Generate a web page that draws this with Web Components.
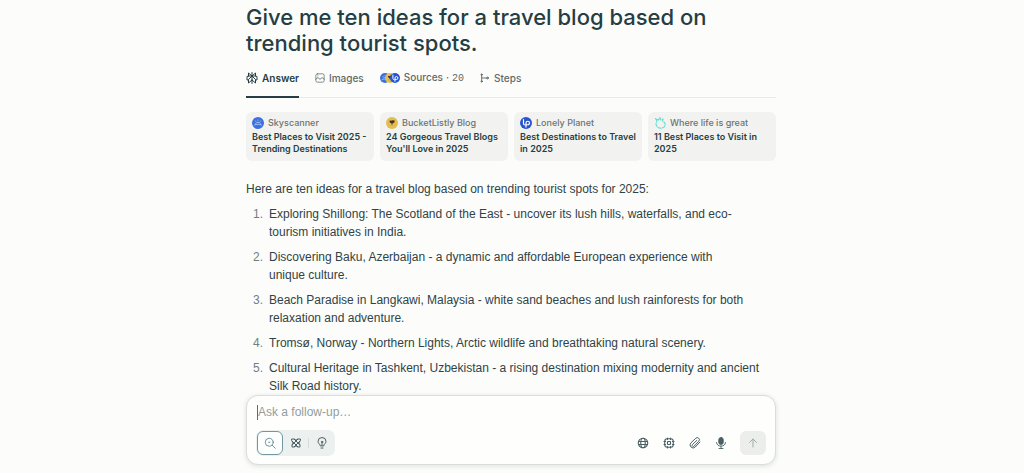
<!DOCTYPE html>
<html lang="en">
<head>
<meta charset="utf-8">
<meta name="viewport" content="width=device-width, initial-scale=1">
<title>Travel blog ideas</title>
<style>
  html, body { margin: 0; height: 100%; }
  body {
    background: #fcfdfa; color: #304347;
    font-family: "Liberation Sans", Arial, sans-serif; font-size: 12px; line-height: 18px;
    --ui: Inter, "Liberation Sans", sans-serif;
    --ink: #263e43; --muted: #5d6a6b; --line: #e8ebe8; --card: #f2f3f0;
  }
</style>
</head>
<body>
<answer-page></answer-page>

<template id="t-page">
  <style>
    :host { display: flex; flex-direction: column; align-items: center; height: 100vh; box-sizing: border-box; padding-right: 2px; overflow: hidden; }
    main, follow-up { width: 100%; max-width: 530px; }
    main { flex: 1; min-height: 0; }
    follow-up { flex: none; margin-bottom: 8px; }
    h1 { margin: 4px 0 0; font: 500 22px/26px var(--ui); color: var(--ink); }
    .cards { display: grid; grid-template-columns: repeat(4, 1fr); gap: 6px; margin-top: 14px; }
    p { margin: 19px 0 7px; }
  </style>
  <main>
    <h1>Give me ten ideas for a travel blog based on<br>trending tourist spots.</h1>
    <tab-bar></tab-bar>
    <section class="cards" aria-label="Sources">
      <source-card icon="sky" site="Skyscanner">Best Places to Visit 2025 -<br>Trending Destinations</source-card>
      <source-card icon="bucket" site="BucketListly Blog">24 Gorgeous Travel Blogs<br>You'll Love in 2025</source-card>
      <source-card icon="lonely" site="Lonely Planet">Best Destinations to Travel<br>in 2025</source-card>
      <source-card icon="life" site="Where life is great">11 Best Places to Visit in<br>2025</source-card>
    </section>
    <p>Here are ten ideas for a travel blog based on trending tourist spots for 2025:</p>
    <idea-list></idea-list>
  </main>
  <follow-up></follow-up>
</template>

<template id="t-tabs">
  <style>
    :host { display: block; margin-top: 12px; border-bottom: 1px solid var(--line); }
    nav { display: flex; gap: 16px; margin-bottom: -1px; }
    button { all: unset; box-sizing: border-box; height: 30px; padding-bottom: 10px; display: flex; align-items: center; gap: 4px;
      font: 500 10px/14px var(--ui); color: var(--muted); cursor: pointer; }
    button[aria-selected=true] { color: var(--ink); font-weight: 600; border-bottom: 2px solid var(--ink); padding-bottom: 8px; }
    .count { font: 400 10px/14px "Liberation Mono", monospace; }
    .label { display: flex; align-items: baseline; gap: 3px; }
    .stack { display: flex; }
    .stack ui-icon + ui-icon { margin-left: -5px; }
  </style>
  <nav role="tablist">
    <button role="tab" aria-selected="true"><ui-icon name="logo" size="12"></ui-icon>Answer</button>
    <button role="tab"><ui-icon name="image" size="10"></ui-icon>Images</button>
    <button role="tab"><span class="stack"><ui-icon name="sky" size="10"></ui-icon><ui-icon name="bucket" size="10"></ui-icon><ui-icon name="lonely" size="10"></ui-icon></span><span class="label">Sources<span>·</span><span class="count">20</span></span></button>
    <button role="tab"><ui-icon name="steps" size="10"></ui-icon>Steps</button>
  </nav>
</template>

<template id="t-card">
  <style>
    :host { display: block; min-width: 0; }
    a { display: block; box-sizing: border-box; height: 100%; padding: 5px 6px 6px; border-radius: 6px; background: var(--card);
      color: var(--ink); text-decoration: none; white-space: nowrap; }
    .site { display: flex; align-items: center; gap: 4px; margin-bottom: 2px; font: 500 9px/12px var(--ui); color: #6c7473; }
    .title { font: 600 9px/12px var(--ui); }
  </style>
  <a href="#"><div class="site"><ui-icon size="12"></ui-icon><span id="site"></span></div><div class="title"><slot></slot></div></a>
</template>

<template id="t-list">
  <style>
    ol { list-style: none; counter-reset: n; margin: 0; padding: 0; }
    li { display: grid; grid-template-columns: 17px 1fr; column-gap: 6px; margin-bottom: 7px; counter-increment: n; }
    li::before { content: counter(n) "."; text-align: right; color: #727e7f; }
  </style>
  <ol>
    <li><span>Exploring Shillong: The Scotland of the East - uncover its lush hills, waterfalls, and eco-<br>tourism initiatives in India.</span></li>
    <li><span>Discovering Baku, Azerbaijan - a dynamic and affordable European experience with<br>unique culture.</span></li>
    <li><span>Beach Paradise in Langkawi, Malaysia - white sand beaches and lush rainforests for both<br>relaxation and adventure.</span></li>
    <li><span>Tromsø, Norway - Northern Lights, Arctic wildlife and breathtaking natural scenery.</span></li>
    <li><span>Cultural Heritage in Tashkent, Uzbekistan - a rising destination mixing modernity and ancient<br>Silk Road history.</span></li>
  </ol>
</template>

<template id="t-follow">
  <style>
    :host { display: block; position: relative; }
    form { box-sizing: border-box; margin: 0; padding: 7px 9px 8px; border: 1px solid #d9dddb; border-radius: 12px; background: #fefffd;
      box-shadow: 0 1px 5px rgba(30, 50, 50, .14); }
    .entry { display: flex; align-items: center; height: 18px; margin-bottom: 9px; }
    .caret { width: 1px; height: 15px; background: #4c7580; margin-left: 1px; }
    input { all: unset; flex: 1; min-width: 0; font-size: 12px; line-height: 18px; }
    input::placeholder { color: #929d9d; opacity: 1; }
    .bar { display: flex; align-items: center; justify-content: space-between; }
    .modes, .tools { display: flex; align-items: center; }
    button { all: unset; box-sizing: border-box; width: 26px; height: 24px; display: flex; align-items: center; justify-content: center; color: #4b6064; cursor: pointer; }
    .modes { padding: 1px; border-radius: 7px; background: #ecf1ef; }
    .modes button { width: 25px; }
    .modes .on { width: 26px; border: 1px solid #7197a2; border-radius: 6px; background: #fdfffe; color: #648791; }
    .sep { width: 1px; height: 10px; background: #d6dddb; }
    .send { margin-left: 6px; border-radius: 6px; background: #eceeec; color: #a3abab; }
  </style>
  <form>
    <div class="entry"><span class="caret"></span><input type="text" aria-label="Ask a follow-up" placeholder="Ask a follow-up…"></div>
    <div class="bar">
      <div class="modes">
        <button type="button" class="on" aria-label="Search"><ui-icon name="search" size="12"></ui-icon></button>
        <button type="button" aria-label="Research"><ui-icon name="research" size="12"></ui-icon></button>
        <span class="sep"></span>
        <button type="button" aria-label="Labs"><ui-icon name="bulb" size="12"></ui-icon></button>
      </div>
      <div class="tools">
        <button type="button" aria-label="Web"><ui-icon name="globe" size="12"></ui-icon></button>
        <button type="button" aria-label="Model"><ui-icon name="chip" size="12"></ui-icon></button>
        <button type="button" aria-label="Attach"><ui-icon name="clip" size="12"></ui-icon></button>
        <button type="button" aria-label="Dictate"><ui-icon name="mic" size="12"></ui-icon></button>
        <button type="submit" class="send" aria-label="Send"><ui-icon name="up" size="12"></ui-icon></button>
      </div>
    </div>
  </form>
</template>

<script>
  // All icons share a 24 unit box and inherit the text colour for strokes.
  const ICONS = {
    logo: '<g stroke-width="2"><path d="M12 1v22M12 8 5 2v6M12 8l7-6v6M5 8h14l3 1v7h-3M5 8 2 9v7h3M12 8l-7 7v7l7-6M12 8l7 7v7l-7-6"/></g>',
    image: '<rect x="2" y="2" width="20" height="20" rx="4"/><path d="M2 15l5-4 5 4 5-4 5 4M7 7h.1" stroke-width="2"/>',
    steps: '<g stroke-width="2.200"><path d="M4 3v18M4 12h14"/><circle cx="4" cy="4" r="1.600"/><circle cx="4" cy="20" r="1.600"/><circle cx="18" cy="12" r="2.200"/></g>',
    sky: '<circle cx="12" cy="12" r="12" fill="#3c70df" stroke="none"/><g stroke="#b9d2fb" stroke-width="1.6"><path d="M5 16c4-2 10-2 14 0M7 13a6 6 0 0 1 10 0M12 6v1M7 8l.5.8M17 8l-.5.8"/></g>',
    bucket: '<circle cx="12" cy="12" r="12" fill="#e3bd50" stroke="none"/><path d="M7 8c2-2 3 0 5-1s3-1 5 0v4c-2 1-3 1-4 2l-1 5-1-5c-2-1-4-2-4-5z" fill="#4a3324" stroke="none"/>',
    lonely: '<circle cx="12" cy="12" r="12" fill="#2755cf" stroke="none"/><path d="M7 5v8c0 2 1 3 3 3M12 20v-8a3.500 3.500 0 1 1 3.500 3.500H13" stroke="#fff" stroke-width="2.400"/>',
    life: '<path d="M6 8l-3-5 6 3 3-5 1 5 5-2-1 4c5 3 7 7 4 11s-11 5-15 0c-2-3-3-6-1-9" stroke="#65dfd2" stroke-width="2.400" stroke-dasharray="6 3"/>',
    search: '<circle cx="10.500" cy="10.500" r="8"/><path d="M16.500 16.500l6 6"/><path d="M9.500 10.500h2" stroke-width="2.400"/>',
    research: '<path d="M4 4h4l12 12v4h-4L4 8zM20 4h-4L4 16v4h4L20 8z" stroke-width="2"/><path d="M9 4l3 2 3-2M9 20l3-2 3 2M4 9l2 3-2 3M20 9l-2 3 2 3" stroke-width="1.600"/>',
    bulb: '<g stroke-width="2"><path d="M8.500 17c0-3-4.500-4-4.500-8a8 8 0 0 1 16 0c0 4-4.500 5-4.500 8zM10 22h4M12 17v-4"/><circle cx="12" cy="10" r="1.500"/></g>',
    globe: '<g stroke-width="2.200"><circle cx="12" cy="12" r="9.500"/><ellipse cx="12" cy="12" rx="4.500" ry="9.500"/><path d="M3 9h18M3 15h18"/></g>',
    chip: '<g stroke-width="2.200"><rect x="3.500" y="3.500" width="17" height="17" rx="5"/><rect x="9" y="9" width="6" height="6" rx="1"/><path d="M9 2v3M15 2v3M9 19v3M15 19v3M2 9h3M2 15h3M19 9h3M19 15h3"/></g>',
    clip: '<path d="M22 10l-9.500 10a6 6 0 0 1-8.500-8.500L13.500 2.500a4.200 4.200 0 0 1 6 6l-9 9.500a2 2 0 0 1-3.500-3L15.500 7" stroke-width="2"/>',
    mic: '<rect x="7.500" y="1" width="9" height="14" rx="4.500" fill="currentColor"/><path d="M3 11c0 10 18 10 18 0M12 18v5M8 23h8"/>',
    up: '<path d="M12 20V4M5 11l7-7 7 7" stroke-width="2"/>'
  };

  class UiIcon extends HTMLElement {
    static observedAttributes = ['name', 'size'];
    constructor() { super(); this.attachShadow({ mode: 'open' }); }
    attributeChangedCallback() {
      const s = this.getAttribute('size') || 12;
      this.shadowRoot.innerHTML = `<style>:host{display:block;flex:none}svg{display:block}</style>
        <svg width="${s}" height="${s}" viewBox="0 0 24 24" fill="none" stroke="currentColor" stroke-width="1.8" stroke-linecap="round" stroke-linejoin="round" aria-hidden="true">${ICONS[this.getAttribute('name')] || ''}</svg>`;
    }
  }

  const fromTemplate = id => class extends HTMLElement {
    constructor() {
      super();
      this.attachShadow({ mode: 'open' }).append(document.getElementById(id).content.cloneNode(true));
    }
  };

  class SourceCard extends fromTemplate('t-card') {
    connectedCallback() {
      this.shadowRoot.querySelector('ui-icon').setAttribute('name', this.getAttribute('icon'));
      this.shadowRoot.getElementById('site').textContent = this.getAttribute('site');
    }
  }

  customElements.define('ui-icon', UiIcon);
  customElements.define('source-card', SourceCard);
  customElements.define('tab-bar', fromTemplate('t-tabs'));
  customElements.define('idea-list', fromTemplate('t-list'));
  customElements.define('follow-up', fromTemplate('t-follow'));
  customElements.define('answer-page', fromTemplate('t-page'));
</script>
</body>
</html>
